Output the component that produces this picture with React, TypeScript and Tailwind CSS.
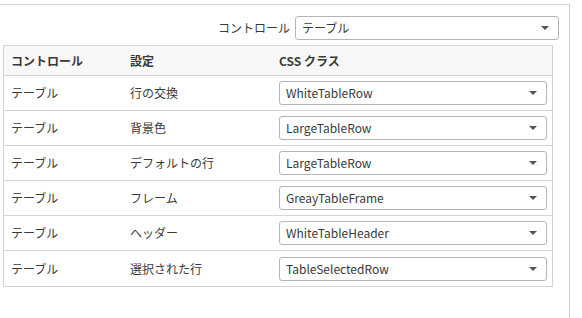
import React from "react";

const rows: [string, string, string][] = [
  ["テーブル", "行の交換", "WhiteTableRow"],
  ["テーブル", "背景色", "LargeTableRow"],
  ["テーブル", "デフォルトの行", "LargeTableRow"],
  ["テーブル", "フレーム", "GreayTableFrame"],
  ["テーブル", "ヘッダー", "WhiteTableHeader"],
  ["テーブル", "選択された行", "TableSelectedRow"],
];

const Caret: React.FC = () => (
  <svg width="8" height="4" viewBox="0 0 8 4" className="shrink-0">
    <path d="M0 0 H8 L4 4 Z" fill="#555" />
  </svg>
);

const FakeSelect: React.FC<{ value: string; className?: string }> = ({
  value,
  className = "",
}) => (
  <div
    className={`flex h-6 items-center justify-between rounded-[3px] border border-[#b5b5b5] bg-white pl-[6px] pr-[9px] ${className}`}
  >
    <span>{value}</span>
    <Caret />
  </div>
);

const App: React.FC = () => {
  return (
    <div
      className="h-[318px] w-[582px] bg-white pt-1 text-[12px] text-[#3a3a3a]"
      style={{ fontFamily: '"Noto Sans CJK JP", "Noto Sans", sans-serif' }}
    >
      <div className="h-[314px] w-[570px] border-t border-r border-[#d4d4d4]">
        <div className="mt-[11px] flex items-center justify-end pr-[10px]">
          <span className="mr-[5px]">コントロール</span>
          <FakeSelect value="テーブル" className="w-[264px]" />
        </div>

        <div className="ml-[3px] mt-[5px] w-[550px] border border-[#d4d4d4]">
          <div className="grid h-[30px] grid-cols-[119px_149px_1fr] items-center border-b border-[#d4d4d4] bg-[#f8f8f8] font-bold">
            <div className="pl-[7px]">コントロール</div>
            <div className="pl-[7px]">設定</div>
            <div className="pl-[7px]">CSS クラス</div>
          </div>
          {rows.map(([control, setting, css], i) => (
            <div
              key={i}
              className={`grid h-[35px] grid-cols-[119px_149px_1fr] items-center ${
                i < rows.length - 1 ? "border-b border-[#d4d4d4]" : ""
              }`}
            >
              <div className="pl-[7px]">{control}</div>
              <div className="pl-[7px]">{setting}</div>
              <div className="pl-[7px] pr-[5px]">
                <FakeSelect value={css} />
              </div>
            </div>
          ))}
        </div>
      </div>
    </div>
  );
};

export default App;
